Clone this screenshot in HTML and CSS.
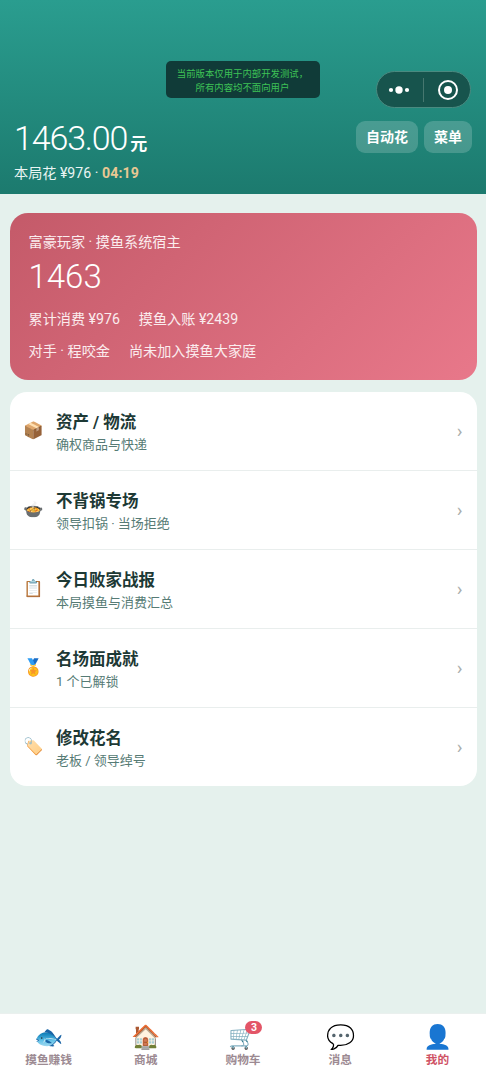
FILE: index.html
```html
<!DOCTYPE html>
<html lang="zh-CN">
<head>
<meta charset="utf-8">
<title>我的</title>
<link rel="stylesheet" href="styles.css">
</head>
<body>
<div class="app">
  <header class="header">
    <div class="balance">
      <div class="amount"><span class="amount-num">1463.00</span><span class="unit">元</span></div>
      <div class="round">本局花 ¥976 · <b class="timer">04:19</b></div>
    </div>
    <div class="actions"><button class="action">自动花</button><button class="action">菜单</button></div>
    <div class="notice">当前版本仅用于内部开发测试，<br>所有内容均不面向用户</div>
    <div class="capsule">
      <svg class="capsule-icon" viewBox="0 0 22 22"><circle cx="3" cy="11" r="2.1"/><circle cx="11" cy="11" r="3.7"/><circle cx="19" cy="11" r="2.1"/></svg>
      <i class="capsule-line"></i>
      <svg class="capsule-icon" viewBox="0 0 22 22"><circle class="ring" cx="11" cy="11" r="9"/><circle cx="11" cy="11" r="4"/></svg>
    </div>
  </header>
  <main class="main">
    <section class="card">
      <div class="card-row">富豪玩家 · 摸鱼系统宿主</div>
      <div class="card-num">1463</div>
      <div class="card-row stats"><span>累计消费 ¥976</span><span>摸鱼入账 ¥2439</span></div>
      <div class="card-row rival"><span>对手 · 程咬金</span><span>尚未加入摸鱼大家庭</span></div>
    </section>
    <section class="list">
      <div class="item"><span class="item-icon">📦</span><div class="item-text"><div class="title">资产 / 物流</div><div class="sub">确权商品与快递</div></div><span class="arrow">›</span></div>
      <div class="item"><span class="item-icon">🍲</span><div class="item-text"><div class="title">不背锅专场</div><div class="sub">领导扣锅 · 当场拒绝</div></div><span class="arrow">›</span></div>
      <div class="item"><span class="item-icon">📋</span><div class="item-text"><div class="title">今日败家战报</div><div class="sub">本局摸鱼与消费汇总</div></div><span class="arrow">›</span></div>
      <div class="item"><span class="item-icon">🏅</span><div class="item-text"><div class="title">名场面成就</div><div class="sub">1 个已解锁</div></div><span class="arrow">›</span></div>
      <div class="item"><span class="item-icon">🏷️</span><div class="item-text"><div class="title">修改花名</div><div class="sub">老板 / 领导绰号</div></div><span class="arrow">›</span></div>
    </section>
  </main>
  <nav class="nav">
    <div class="tab"><span class="tab-icon">🐟</span><span class="tab-label">摸鱼赚钱</span></div>
    <div class="tab"><span class="tab-icon">🏠</span><span class="tab-label">商城</span></div>
    <div class="tab"><span class="tab-icon">🛒<b class="badge">3</b></span><span class="tab-label">购物车</span></div>
    <div class="tab"><span class="tab-icon">💬</span><span class="tab-label">消息</span></div>
    <div class="tab active"><span class="tab-icon">👤</span><span class="tab-label">我的</span></div>
  </nav>
</div>
</body>
</html>
```
FILE: styles.css
```css
* { box-sizing: border-box; }
body { margin: 0; font-family: Roboto, "Noto Sans CJK SC", sans-serif; }
.app { width: 486px; height: 1080px; display: flex; flex-direction: column; background: #e5f1ed; overflow: hidden; }
.header { position: relative; height: 194px; padding: 119px 14px 0; display: flex; justify-content: space-between; background: linear-gradient(#2a9d8f, #1c7a6e); color: #fff; }
.amount { display: flex; align-items: baseline; height: 42px; line-height: 38px; }
.amount-num { font-size: 34px; font-weight: 300; letter-spacing: -1.15px; }
.unit { font-size: 17px; font-weight: 700; margin-left: 3px; }
.round { font-size: 14.15px; line-height: 21px; margin-top: 2px; color: #eaf5f3; }
.timer { color: #e9c893; font-weight: 700; letter-spacing: 0.15px; }
.actions { display: flex; gap: 6px; padding-top: 2px; }
.action { height: 32px; padding: 0 10px; border: 0; border-radius: 9px; background: rgba(255,255,255,.18); color: #fff; font: 700 14px/32px Roboto, "Noto Sans CJK SC", sans-serif; }
.notice { position: absolute; left: 166px; top: 61px; width: 154px; height: 37px; padding: 6px 1px 0 0; border-radius: 5px; background: #103b38; color: #3ec256; font-size: 9.4px; line-height: 13.6px; text-align: center; white-space: nowrap; }
.capsule { position: absolute; left: 376px; top: 71px; width: 95px; height: 37px; border: 1px solid #4a8a80; border-radius: 19px; background: #17544d; display: flex; align-items: center; justify-content: space-between; padding: 0 11px; }
.capsule-icon { width: 22px; height: 22px; fill: #fff; }
.ring { fill: none; stroke: #fff; stroke-width: 2; }
.capsule-line { width: 1px; height: 24px; background: #46776f; }
.main { flex: 1; padding: 19px 9.5px 0; }
.card { height: 167px; padding: 19px; border-radius: 18px; background: linear-gradient(135deg, #c45a69, #e8788a); color: #fff; }
.card-row { font-size: 14.15px; line-height: 21px; color: #fbecee; display: flex; gap: 19px; }
.card-num { font-size: 33px; font-weight: 300; line-height: 38px; margin-top: 5px; }
.stats { margin-top: 13px; }
.rival { margin-top: 11px; }
.list { margin-top: 12px; border-radius: 17px; background: #fff; overflow: hidden; }
.item { display: flex; align-items: center; height: 79px; padding: 0 14px; border-bottom: 1px solid #e9eeed; }
.item:last-child { border-bottom: 0; height: 78px; }
.item-icon { width: 19px; font-size: 16.5px; line-height: 24px; margin: 0 13.5px 0 0; text-align: center; display: flex; justify-content: center; }
.item-text { flex: 1; }
.title { font-size: 16.5px; font-weight: 700; line-height: 23px; margin-top: 2px; color: #1d3935; }
.sub { font-size: 13px; line-height: 19px; margin-top: 1px; color: #567b75; }
.arrow { font-size: 19px; margin-top: -2px; color: #a9adac; }
.nav { height: 67px; display: grid; grid-template-columns: repeat(5, 1fr); background: #fff; border-top: 1px solid #eaf0ee; }
.tab { display: flex; flex-direction: column; align-items: center; padding-top: 8px; color: #9c8a92; }
.tab-icon { position: relative; font-size: 23.5px; line-height: 30px; height: 30px; }
.tab-label { font-size: 11.7px; font-weight: 700; line-height: 17px; }
.active { color: #cf5265; }
.badge { position: absolute; left: 17px; top: -1px; width: 17px; height: 13px; border-radius: 7px; background: #e35567; color: #fff; font-size: 10.5px; line-height: 13px; text-align: center; }
```
